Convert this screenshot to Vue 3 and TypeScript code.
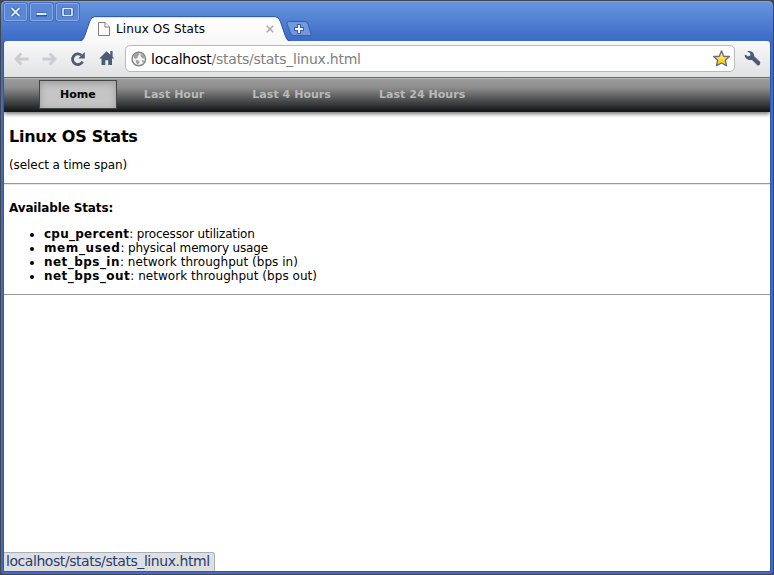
<script setup lang="ts">
interface Stat {
  name: string
  description: string
}

const navItems: string[] = ['Home', 'Last Hour', 'Last 4 Hours', 'Last 24 Hours']
const stats: Stat[] = [
  { name: 'cpu_percent', description: 'processor utilization' },
  { name: 'mem_used', description: 'physical memory usage' },
  { name: 'net_bps_in', description: 'network throughput (bps in)' },
  { name: 'net_bps_out', description: 'network throughput (bps out)' },
]
</script>

<template>
  <div class="backdrop">
    <div class="window">
      <header class="titlebar">
        <div class="controls">
          <button class="control" aria-label="Close">
            <svg width="21" height="16" viewBox="0 0 21 16"><path d="M6.500 4l8 8M14.500 4l-8 8" stroke="#2c57a4" stroke-width="3.6" /><path d="M6.500 4l8 8M14.500 4l-8 8" stroke="#dce9fc" stroke-width="1.9" /></svg>
          </button>
          <button class="control" aria-label="Minimize">
            <svg width="21" height="16" viewBox="0 0 21 16"><rect x="5" y="8.500" width="11" height="4" fill="#2c57a4" /><rect x="5.500" y="9" width="10" height="2" fill="#dce9fc" /></svg>
          </button>
          <button class="control" aria-label="Maximize">
            <svg width="21" height="16" viewBox="0 0 21 16"><rect x="6" y="4.500" width="9" height="7" rx="1" fill="none" stroke="#2c57a4" stroke-width="3.200" /><rect x="6" y="4.500" width="9" height="7" rx=".5" fill="none" stroke="#dce9fc" stroke-width="1.700" /></svg>
          </button>
        </div>
        <div class="tab">
          <svg class="tab-shape" width="210" height="26" viewBox="0 0 210 26">
            <defs>
              <linearGradient id="tabFill" x1="0" y1="0" x2="0" y2="1"><stop offset="0" stop-color="#fff" /><stop offset="1" stop-color="#f8f8f8" /></linearGradient>
            </defs>
            <path d="M0 25C3 25 3.500 23 5 19L9.500 6Q11 1 14.500 1H195.500Q199 1 200.500 6L205 19C206.500 23 207 25 210 25V26H0Z" fill="url(#tabFill)" />
            <path d="M0 24.500C3 24.500 3.500 23 5 19L9.500 6Q11 .7 14.500 .7H195.500Q199 .7 200.500 6L205 19C206.500 23 207 24.500 210 24.500" fill="none" stroke="#2e56a1" />
          </svg>
          <svg class="page-icon" width="14" height="16" viewBox="0 0 14 16"><path d="M1.500 1.500H8L12.500 6V14.500H1.500Z" fill="#fafafa" stroke="#808080" /><path d="M8 1.500V6H12.500" fill="#fff" stroke="#808080" /></svg>
          <span class="tab-title">Linux OS Stats</span>
          <svg class="tab-close" width="8" height="8" viewBox="0 0 8 8"><path d="M.8.8l6.400 6.400M7.200.8L.8 7.200" stroke="#a9a9a9" stroke-width="1.500" /></svg>
        </div>
        <svg class="new-tab" width="27" height="16" viewBox="0 0 27 16">
          <path d="M2.500.5H19Q21 .5 22 3L25.500 14.500H8Q5.500 14.500 4.500 12L1 3Q.5.5 2.500.5Z" fill="#7399dc" stroke="#365fac" />
          <path d="M13 3V13M8 8H18" stroke="#365fac" stroke-width="4" />
          <path d="M13 4V12M9 8H17" stroke="#edf4ff" stroke-width="2" />
        </svg>
      </header>

      <div class="toolbar">
        <svg width="16" height="14" viewBox="0 0 16 14"><path d="M7.300 1.500L2 7L7.300 12.500M2.500 7H14.500" fill="none" stroke="#c9ccd3" stroke-width="2.800" /></svg>
        <svg class="forward" width="16" height="14" viewBox="0 0 16 14"><path d="M8.700 1.500L14 7L8.700 12.500M13.500 7H1.500" fill="none" stroke="#c9ccd3" stroke-width="2.800" /></svg>
        <svg class="reload" width="16" height="16" viewBox="0 0 16 16"><path d="M11.400 4.300A5.300 5.300 0 1 0 12.600 10.600" fill="none" stroke="#4d5c76" stroke-width="2.800" /><path d="M14.800 1V7.500H8.300Z" fill="#4d5c76" /></svg>
        <svg class="home" width="16" height="16" viewBox="0 0 16 16"><path d="M7.500 .3L.3 7.500H2.500V14H6.300V9.300H9.200V14H13V7.500H15.200L13.600 5.700V0H11.300V3.700Z" fill="#4d5c76" /></svg>
        <div class="omnibox">
          <svg width="16" height="16" viewBox="0 0 16 16"><circle cx="7.800" cy="8" r="6.800" fill="#f6f6f6" stroke="#828282" stroke-width="1.400" /><path d="M2.500 4.500L5 2.300L8 2L8.500 3.500L7 5L6.500 7L4.500 8L3 7ZM4.500 8.700L7.500 9.500L8.700 11L7 13.500L5.500 12.500ZM10 2.500L13 4.500L13.800 8L11 7L9.500 5ZM10.500 9L13.500 9.500L12 12Z" fill="#a0a0a0" /></svg>
          <span class="url"><span class="host">localhost</span>/stats/stats_linux.html</span>
          <svg class="star" width="18" height="18" viewBox="0 0 18 18"><defs><linearGradient id="gold" x1="0" y1="0" x2="0" y2="1"><stop offset="0" stop-color="#fff29b" /><stop offset="1" stop-color="#ffc800" /></linearGradient></defs><path d="M9.500 1L11.700 6.200L17.300 6.500L13.300 10.200L14.500 15.700L9.500 13L4.500 15.700L5.700 10.200L1.700 6.500L7.300 6.200Z" fill="url(#gold)" stroke="#6a6e78" stroke-width="1.400" stroke-linejoin="round" /></svg>
        </div>
        <svg class="wrench" width="17" height="17" viewBox="0 0 17 17"><path d="M3.200 1.200C7 .2 10.500 2.500 10.200 6.300L16.300 12L16 14.500L13.900 15.700L8 9.900C4.700 10.800 1 8.900.7 5.300L1.800 4.800L4 6.600L6.300 5.600L6.200 3.200Z" fill="#4d5c76" /></svg>
      </div>

      <main class="page">
        <nav class="menu">
          <a v-for="(item, index) in navItems" :key="item" class="menu-item" :class="{ active: index === 0 }">{{ item }}</a>
        </nav>
        <section class="intro">
          <h1>Linux OS Stats</h1>
          <p>(select a time span)</p>
        </section>
        <section class="available">
          <h2>Available Stats:</h2>
          <ul>
            <li v-for="stat in stats" :key="stat.name"><b>{{ stat.name }}</b>: {{ stat.description }}</li>
          </ul>
        </section>
        <div class="status">localhost/stats/stats_linux.html</div>
      </main>
    </div>
  </div>
</template>

<style>
body {
  overflow: hidden;
}
</style>

<style scoped>
.backdrop {
  box-sizing: border-box;
  width: 774px;
  height: 575px;
  padding: 1px;
  background: #45464a;
  font-family: "DejaVu Sans", sans-serif;
}
svg {
  display: block;
  flex: none;
}
.window {
  box-sizing: border-box;
  display: flex;
  flex-direction: column;
  width: 772px;
  height: 573px;
  padding: 0 3px 3px;
  border-radius: 5px 5px 3px 3px;
  background: linear-gradient(#6796df 0, #3e6cc7 38px, #3e6cc7);
  box-shadow: inset 0 1px #78a3e5;
}
.titlebar {
  display: flex;
  flex: none;
  height: 40px;
}
.controls {
  display: flex;
  gap: 3px;
  margin: 2px 0 0;
}
.control {
  box-sizing: border-box;
  width: 23px;
  height: 18px;
  padding: 0;
  border: 1px solid #84a9e5;
  border-radius: 2px;
  background: #5b87d6;
  box-shadow: 0 0 0 1px #416fc1;
  overflow: hidden;
}
.tab {
  position: relative;
  display: flex;
  align-items: center;
  box-sizing: border-box;
  width: 210px;
  height: 26px;
  margin: 15px 0 0 1px;
  padding: 0 16px 0 17px;
}
.tab-shape {
  position: absolute;
  inset: 0;
}
.page-icon,
.tab-title,
.tab-close {
  position: relative;
}
.tab-title {
  margin-left: 5px;
  font-size: 12px;
  line-height: 14px;
  letter-spacing: .1px;
  white-space: nowrap;
}
.tab-close {
  margin-left: auto;
}
.new-tab {
  margin: 20px 0 0 -4px;
}
.toolbar {
  position: relative;
  display: flex;
  align-items: center;
  flex: none;
  box-sizing: border-box;
  height: 37px;
  padding: 0 9px 1px 10px;
  border-radius: 3px 3px 0 0;
  border-bottom: 1px solid #636b7c;
  background: linear-gradient(#f9f9f9, #e1e2e3);
  box-shadow: -1px 0 #3158a3, 1px 0 #3158a3;
  clip-path: inset(0 -1px 0 -1px);
}
.forward {
  margin-left: 11px;
}
.reload {
  margin-left: 13px;
}
.home {
  margin-left: 13px;
}
.omnibox {
  display: flex;
  align-items: center;
  box-sizing: border-box;
  width: 610px;
  height: 27px;
  margin-left: 10px;
  padding: 0 4px 0 5px;
  border: 1px solid #b7b9bc;
  border-radius: 5px;
  background: #fff;
}
.url {
  margin-left: 4px;
  color: #808080;
  font-size: 14px;
  line-height: 20px;
  letter-spacing: -.25px;
  white-space: nowrap;
}
.host {
  color: #000;
}
.star {
  margin-left: auto;
}
.wrench {
  margin-left: auto;
}
.page {
  position: relative;
  flex: 1;
  box-sizing: border-box;
  border-top: 1px solid #b7b7b5;
  background: #fff;
  box-shadow: 0 0 0 1px #3158a3;
  clip-path: inset(0 -1px -1px -1px);
  color: #000;
  font-size: 12px;
}
.menu {
  display: flex;
  align-items: flex-start;
  box-sizing: border-box;
  height: 33px;
  padding: 1px 0 0 35px;
  background: linear-gradient(#999, #8f8f8f 25%, #171a1b 96%);
  box-shadow: 0 2px 4px #777;
  clip-path: inset(0 0 -6px 0);
}
.menu-item {
  box-sizing: border-box;
  height: 29px;
  margin-right: 6px;
  padding: 0 21px;
  color: #b9b9b9;
  font-size: 11px;
  font-weight: bold;
  line-height: 29px;
  letter-spacing: .04px;
  white-space: nowrap;
}
.menu-item.active {
  border: 1px solid #444;
  padding: 0 20px;
  color: #000;
  line-height: 27px;
  background: #c5c5c5;
  box-shadow: inset 0 2px 7px #999;
}
.intro {
  box-sizing: border-box;
  height: 72px;
  padding: 15px 5px 0;
  border-bottom: 1px solid #999;
}
h1 {
  margin: 0;
  font-size: 16px;
  line-height: 19px;
  letter-spacing: -.26px;
}
p {
  margin: 12px 0 0;
  line-height: 14px;
  letter-spacing: -.08px;
}
.available {
  box-sizing: border-box;
  height: 111px;
  padding: 16px 5px 0;
  border-top: 1px solid #e8e8e8;
  border-bottom: 1px solid #999;
}
h2 {
  margin: 0;
  font-size: 12px;
  line-height: 14px;
  letter-spacing: -.14px;
}
ul {
  margin: 12px 0 0;
  padding-left: 35px;
}
li {
  line-height: 14px;
  letter-spacing: .04px;
}
li:nth-child(1),
li:nth-child(2) {
  letter-spacing: -.15px;
}
b {
  letter-spacing: .45px;
}
li:nth-child(1) b {
  letter-spacing: .25px;
}
li:nth-child(2) b {
  letter-spacing: .6px;
}
.status {
  position: absolute;
  left: 0;
  bottom: 0;
  box-sizing: border-box;
  width: 211px;
  height: 19px;
  padding-left: 2px;
  border-top: 1px solid #aab0bb;
  border-right: 1px solid #aab0bb;
  border-radius: 0 3px 0 0;
  background: #dfdfdf;
  color: #243d75;
  font-size: 14px;
  line-height: 17px;
  letter-spacing: -.44px;
  white-space: nowrap;
}
</style>
